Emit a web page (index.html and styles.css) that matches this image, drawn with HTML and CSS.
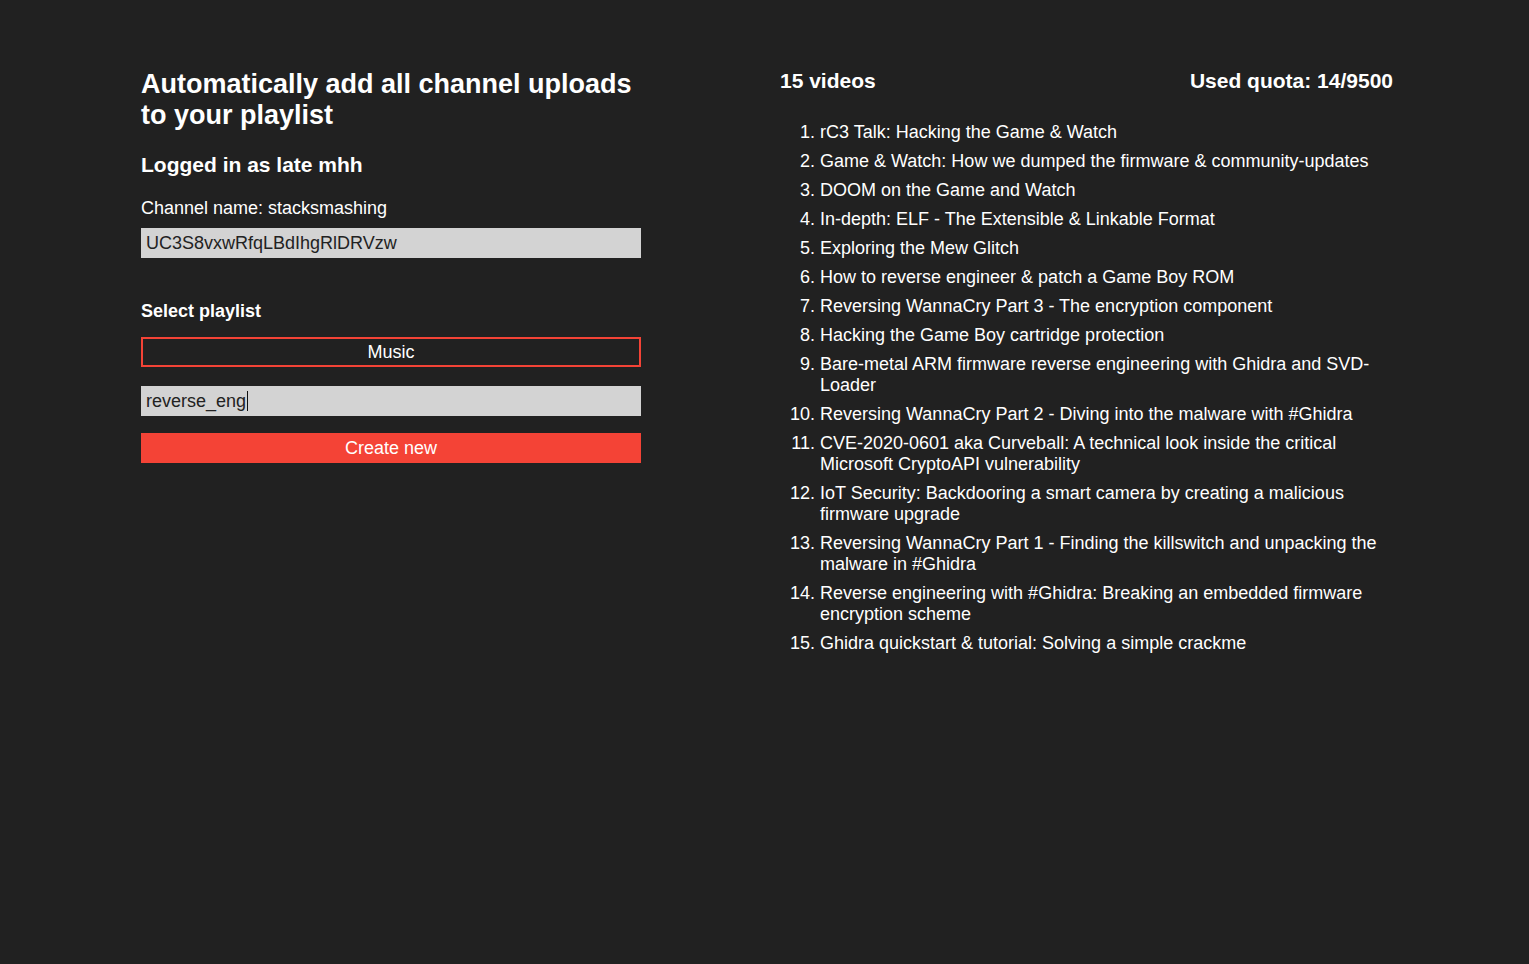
FILE: index.html
```html
<!DOCTYPE html>
<html>
<head>
<meta charset="utf-8">
<title>Playlist</title>
<link rel="stylesheet" href="styles.css">
</head>
<body>
<div class="page">
  <section class="left">
    <h1 class="title">Automatically add all channel uploads to your playlist</h1>
    <h2 class="user">Logged in as late mhh</h2>
    <label class="label">Channel name: stacksmashing</label>
    <div class="field">UC3S8vxwRfqLBdIhgRlDRVzw</div>
    <h3 class="select-title">Select playlist</h3>
    <div class="btn-outline">Music</div>
    <div class="field field-new">reverse_eng<span class="caret"></span></div>
    <div class="btn-fill">Create new</div>
  </section>
  <section class="right">
    <div class="head">
      <span>15 videos</span>
      <span>Used quota: 14/9500</span>
    </div>
    <ol class="videos">
      <li>rC3 Talk: Hacking the Game &amp; Watch</li>
      <li>Game &amp; Watch: How we dumped the firmware &amp; community-updates</li>
      <li>DOOM on the Game and Watch</li>
      <li>In-depth: ELF - The Extensible &amp; Linkable Format</li>
      <li>Exploring the Mew Glitch</li>
      <li>How to reverse engineer &amp; patch a Game Boy ROM</li>
      <li>Reversing WannaCry Part 3 - The encryption component</li>
      <li>Hacking the Game Boy cartridge protection</li>
      <li>Bare-metal ARM firmware reverse engineering with Ghidra and SVD-Loader</li>
      <li>Reversing WannaCry Part 2 - Diving into the malware with #Ghidra</li>
      <li>CVE-2020-0601 aka Curveball: A technical look inside the critical Microsoft CryptoAPI vulnerability</li>
      <li>IoT Security: Backdooring a smart camera by creating a malicious firmware upgrade</li>
      <li>Reversing WannaCry Part 1 - Finding the killswitch and unpacking the malware in #Ghidra</li>
      <li>Reverse engineering with #Ghidra: Breaking an embedded firmware encryption scheme</li>
      <li>Ghidra quickstart &amp; tutorial: Solving a simple crackme</li>
    </ol>
  </section>
</div>
</body>
</html>
```
FILE: styles.css
```css
html, body {
  margin: 0;
  padding: 0;
  background: #212121;
  color: #ffffff;
  font-family: "Liberation Sans", Arial, sans-serif;
}
.page {
  display: flex;
  padding: 69px 0 0 141px;
  gap: 139px;
}
.left {
  width: 500px;
  display: flex;
  flex-direction: column;
}
.title {
  margin: 0;
  font-size: 27px;
  line-height: 31px;
  font-weight: bold;
}
.user {
  margin: 22px 0 0;
  font-size: 21px;
  line-height: 24px;
  font-weight: bold;
}
.label {
  margin-top: 21px;
  font-size: 18px;
  line-height: 21px;
}
.field {
  margin-top: 9px;
  height: 30px;
  background: #d3d3d3;
  color: #222;
  font-size: 18px;
  line-height: 30px;
  padding-left: 5px;
  box-sizing: border-box;
  display: flex;
  align-items: center;
}
.caret {
  display: inline-block;
  width: 1px;
  height: 20px;
  background: #111;
  margin-left: 1px;
}
.select-title {
  margin: 43px 0 0;
  font-size: 18px;
  line-height: 21px;
  font-weight: bold;
}
.btn-outline {
  margin-top: 15px;
  height: 30px;
  border: 2px solid #f44336;
  box-sizing: border-box;
  text-align: center;
  font-size: 18px;
  line-height: 26px;
}
.field-new {
  margin-top: 19px;
}
.btn-fill {
  margin-top: 17px;
  height: 30px;
  background: #f44336;
  text-align: center;
  font-size: 18px;
  line-height: 30px;
}
.right {
  width: 613px;
}
.head {
  display: flex;
  justify-content: space-between;
  font-size: 21px;
  line-height: 24px;
  font-weight: bold;
  margin-top: 0;
}
.videos {
  margin: 29px 0 0;
  padding-left: 40px;
  font-size: 18px;
  line-height: 21px;
}
.videos li {
  margin-bottom: 8px;
}
```
